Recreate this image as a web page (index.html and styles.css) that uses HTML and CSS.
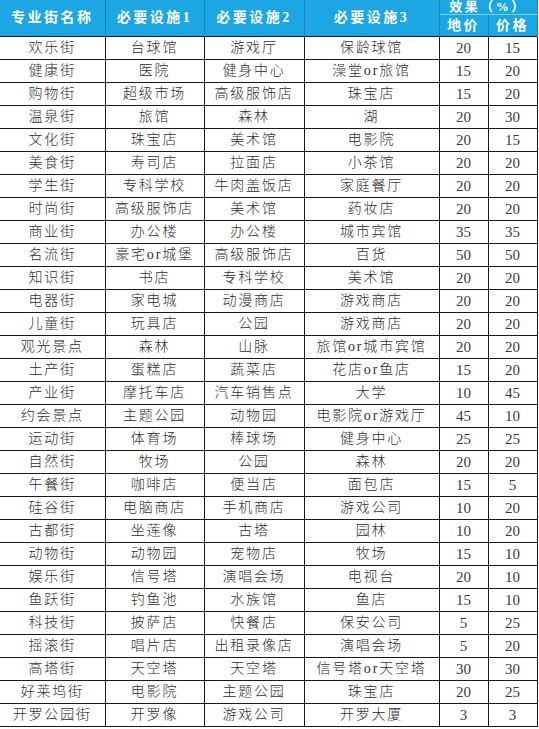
FILE: index.html
```html
<!DOCTYPE html>
<html lang="zh">
<head>
<meta charset="utf-8">
<title>专业街</title>
<link rel="stylesheet" href="styles.css">
</head>
<body>
<table class="streets">
  <colgroup>
    <col class="c-name"><col class="c-f1"><col class="c-f2"><col class="c-f3"><col class="c-land"><col class="c-price">
  </colgroup>
  <thead>
    <tr class="h-top">
      <th rowspan="2">专业街名称</th>
      <th rowspan="2">必要设施1</th>
      <th rowspan="2">必要设施2</th>
      <th rowspan="2">必要设施3</th>
      <th colspan="2" class="effect">效果（%）</th>
    </tr>
    <tr class="h-sub">
      <th>地价</th>
      <th>价格</th>
    </tr>
  </thead>
  <tbody>
    <tr><td>欢乐街</td><td>台球馆</td><td>游戏厅</td><td>保龄球馆</td><td class="num">20</td><td class="num">15</td></tr>
    <tr><td>健康街</td><td>医院</td><td>健身中心</td><td>澡堂or旅馆</td><td class="num">15</td><td class="num">20</td></tr>
    <tr><td>购物街</td><td>超级市场</td><td>高级服饰店</td><td>珠宝店</td><td class="num">15</td><td class="num">20</td></tr>
    <tr><td>温泉街</td><td>旅馆</td><td>森林</td><td>湖</td><td class="num">20</td><td class="num">30</td></tr>
    <tr><td>文化街</td><td>珠宝店</td><td>美术馆</td><td>电影院</td><td class="num">20</td><td class="num">15</td></tr>
    <tr><td>美食街</td><td>寿司店</td><td>拉面店</td><td>小茶馆</td><td class="num">20</td><td class="num">20</td></tr>
    <tr><td>学生街</td><td>专科学校</td><td>牛肉盖饭店</td><td>家庭餐厅</td><td class="num">20</td><td class="num">20</td></tr>
    <tr><td>时尚街</td><td>高级服饰店</td><td>美术馆</td><td>药妆店</td><td class="num">20</td><td class="num">20</td></tr>
    <tr><td>商业街</td><td>办公楼</td><td>办公楼</td><td>城市宾馆</td><td class="num">35</td><td class="num">35</td></tr>
    <tr><td>名流街</td><td>豪宅or城堡</td><td>高级服饰店</td><td>百货</td><td class="num">50</td><td class="num">50</td></tr>
    <tr><td>知识街</td><td>书店</td><td>专科学校</td><td>美术馆</td><td class="num">20</td><td class="num">20</td></tr>
    <tr><td>电器街</td><td>家电城</td><td>动漫商店</td><td>游戏商店</td><td class="num">20</td><td class="num">20</td></tr>
    <tr><td>儿童街</td><td>玩具店</td><td>公园</td><td>游戏商店</td><td class="num">20</td><td class="num">20</td></tr>
    <tr><td>观光景点</td><td>森林</td><td>山脉</td><td>旅馆or城市宾馆</td><td class="num">20</td><td class="num">20</td></tr>
    <tr><td>土产街</td><td>蛋糕店</td><td>蔬菜店</td><td>花店or鱼店</td><td class="num">15</td><td class="num">20</td></tr>
    <tr><td>产业街</td><td>摩托车店</td><td>汽车销售点</td><td>大学</td><td class="num">10</td><td class="num">45</td></tr>
    <tr><td>约会景点</td><td>主题公园</td><td>动物园</td><td>电影院or游戏厅</td><td class="num">45</td><td class="num">10</td></tr>
    <tr><td>运动街</td><td>体育场</td><td>棒球场</td><td>健身中心</td><td class="num">25</td><td class="num">25</td></tr>
    <tr><td>自然街</td><td>牧场</td><td>公园</td><td>森林</td><td class="num">20</td><td class="num">20</td></tr>
    <tr><td>午餐街</td><td>咖啡店</td><td>便当店</td><td>面包店</td><td class="num">15</td><td class="num">5</td></tr>
    <tr><td>硅谷街</td><td>电脑商店</td><td>手机商店</td><td>游戏公司</td><td class="num">10</td><td class="num">20</td></tr>
    <tr><td>古都街</td><td>坐莲像</td><td>古塔</td><td>园林</td><td class="num">10</td><td class="num">20</td></tr>
    <tr><td>动物街</td><td>动物园</td><td>宠物店</td><td>牧场</td><td class="num">15</td><td class="num">10</td></tr>
    <tr><td>娱乐街</td><td>信号塔</td><td>演唱会场</td><td>电视台</td><td class="num">20</td><td class="num">10</td></tr>
    <tr><td>鱼跃街</td><td>钓鱼池</td><td>水族馆</td><td>鱼店</td><td class="num">15</td><td class="num">10</td></tr>
    <tr><td>科技街</td><td>披萨店</td><td>快餐店</td><td>保安公司</td><td class="num">5</td><td class="num">25</td></tr>
    <tr><td>摇滚街</td><td>唱片店</td><td>出租录像店</td><td>演唱会场</td><td class="num">5</td><td class="num">20</td></tr>
    <tr><td>高塔街</td><td>天空塔</td><td>天空塔</td><td>信号塔or天空塔</td><td class="num">30</td><td class="num">30</td></tr>
    <tr><td>好莱坞街</td><td>电影院</td><td>主题公园</td><td>珠宝店</td><td class="num">20</td><td class="num">25</td></tr>
    <tr><td>开罗公园街</td><td>开罗像</td><td>游戏公司</td><td>开罗大厦</td><td class="num">3</td><td class="num">3</td></tr>
  </tbody>
</table>
</body>
</html>
```

FILE: styles.css
```css
html, body {
  margin: 0;
  padding: 0;
  background: #ffffff;
}

.streets {
  border-collapse: collapse;
  table-layout: fixed;
  width: 537px;
  font-family: "Liberation Serif", "Noto Sans CJK SC", serif;
}

.c-name { width: 105px; }
.c-f1 { width: 99px; }
.c-f2 { width: 100px; }
.c-f3 { width: 135px; }
.c-land { width: 49px; }
.c-price { width: 49px; }

.streets th {
  background: #1ca6e3;
  color: #ffffff;
  font-family: "Liberation Serif", "Noto Sans CJK SC", serif;
  font-weight: bold;
  font-size: 14px;
  letter-spacing: 2.5px;
  text-align: center;
  padding: 0;
  border-left: 1px solid #1184bd;
  border-right: 1px solid #1184bd;
  line-height: 1;
}

.streets th:first-child {
  border-left: none;
}

.h-top th {
  height: 14px;
}

.h-top .effect {
  border-bottom: 1px solid #7fcdf0;
  font-size: 13px;
  line-height: 14px;
  vertical-align: middle;
  white-space: nowrap;
}

.h-sub th {
  height: 21px;
  border-left: 1px solid #8fd3f2;
}

.streets tbody tr {
  height: 23px;
}

.streets td {
  padding: 0;
  height: 22px;
  text-align: center;
  vertical-align: middle;
  font-size: 14px;
  font-weight: 300;
  letter-spacing: 1.8px;
  color: #2e2e2e;
  border: 1px solid #1a1a1a;
  line-height: 1;
  white-space: nowrap;
}

.streets td:first-child {
  border-left: none;
}

.streets td.num {
  letter-spacing: 0;
  font-size: 15px;
  font-weight: normal;
  color: #3a3a3a;
}
```
